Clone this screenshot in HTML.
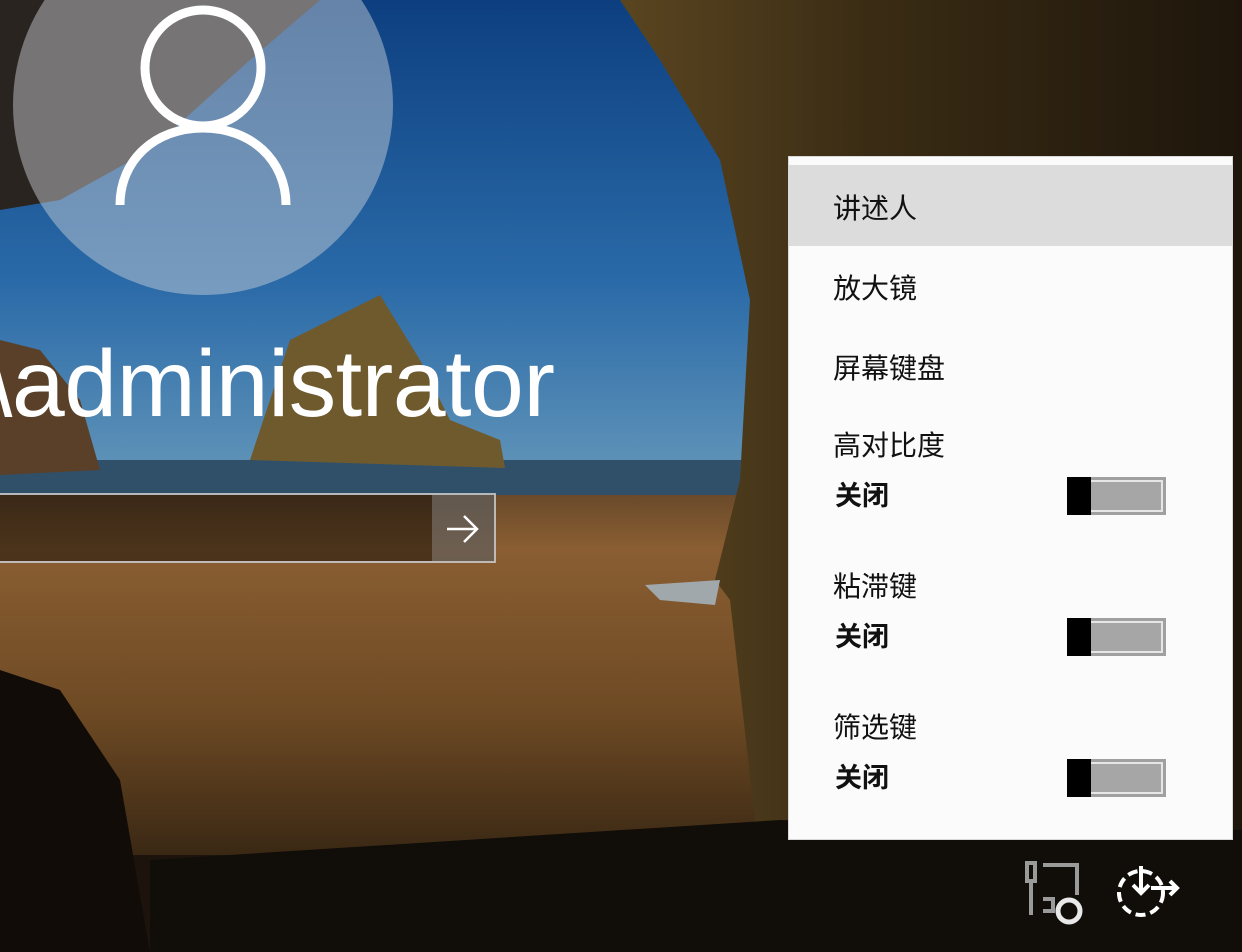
<!DOCTYPE html>
<html><head><meta charset="utf-8"><style>
*{margin:0;padding:0}
body{width:1242px;height:952px;overflow:hidden;position:relative;background:#1a120a;font-family:"Liberation Sans","Noto Sans CJK SC",sans-serif}
.abs{position:absolute}
.menu{left:788px;top:156px;width:445px;height:684px;background:#fbfbfc;border:1px solid #d8d8d8;box-sizing:border-box}
.item{position:absolute;left:44px;font-size:28px;color:#111;line-height:1}
.off{position:absolute;left:46px;font-size:27px;font-weight:bold;color:#111;line-height:1}
.tg{position:absolute;left:278px;width:99px;height:38px;box-sizing:border-box;background:#a6a6a6;border:3px solid #a0a0a0;box-shadow:inset 0 0 0 2px #e6e6e6}
.tg:before{content:"";position:absolute;left:-3px;top:-3px;width:24px;height:38px;background:#000}
</style></head><body>
<svg class="abs" style="left:0;top:0" width="1242" height="952">
<defs>
<linearGradient id="sky" x1="0" y1="0" x2="0" y2="1"><stop offset="0" stop-color="#0d3f80"/><stop offset=".6" stop-color="#2a6aa8"/><stop offset="1" stop-color="#5f93b8"/></linearGradient>
<linearGradient id="sand" x1="0" y1="0" x2="0" y2="1"><stop offset="0" stop-color="#6a4a2a"/><stop offset=".15" stop-color="#8a5e32"/><stop offset=".6" stop-color="#6e4a24"/><stop offset="1" stop-color="#3a2814"/></linearGradient>
<linearGradient id="cave" x1="0" y1="0" x2="1" y2="0"><stop offset="0" stop-color="#5a4520"/><stop offset=".4" stop-color="#3a2c14"/><stop offset="1" stop-color="#1e160c"/></linearGradient>
</defs>
<rect width="1242" height="952" fill="#1c140c"/>
<rect x="0" y="0" width="760" height="470" fill="url(#sky)"/>
<rect x="0" y="460" width="760" height="40" fill="#30506a"/>
<rect x="0" y="495" width="780" height="360" fill="url(#sand)"/>
<path d="M0 0H320L250 60L150 150L60 200L0 210Z" fill="#2a2420"/>
<path d="M0 340L40 350L80 400L100 470L0 475Z" fill="#5a4028"/>
<path d="M250 460L290 340L380 295L420 360L450 420L500 440L505 468Z" fill="#6f5a2e"/>
<path d="M620 0H1242V952H770L730 600L715 580L740 480L750 300L720 160L660 60Z" fill="url(#cave)"/>
<path d="M0 670L60 690L120 780L150 952H0Z" fill="#120c08"/>
<path d="M150 860L780 820L1242 830V952H150Z" fill="#110d09"/>
<path d="M645 585L720 580L715 605L660 600Z" fill="#a0a8ac"/>
</svg>
<div class="abs" style="left:13px;top:-85px;width:380px;height:380px;border-radius:50%;background:rgba(210,215,220,.45)"></div>
<svg class="abs" style="left:110px;top:0" width="190" height="210" fill="none" stroke="#fff" stroke-width="9">
<circle cx="93" cy="68" r="58"/>
<path d="M10 205C10 160 45 128 93 128C141 128 176 160 176 205"/>
</svg>
<div class="abs" style="left:-14px;top:330px;font-size:95px;color:#fff;letter-spacing:-.5px;white-space:nowrap">\administrator</div>
<div class="abs" style="left:-2px;top:493px;width:498px;height:70px;border:2px solid rgba(220,220,220,.8);box-sizing:border-box;background:rgba(0,0,0,.45)"></div>
<div class="abs" style="left:432px;top:495px;width:62px;height:66px;background:rgba(160,160,160,.4)"></div>
<svg class="abs" style="left:445px;top:512px" width="36" height="34" fill="none" stroke="#fff" stroke-width="2.5"><path d="M2 17H32M19 4L32 17L19 30"/></svg>
<div class="abs menu">
<div class="abs" style="left:0;top:8px;width:443px;height:81px;background:#dcdcdc"></div>
<div class="item" style="top:38px">讲述人</div>
<div class="item" style="top:118px">放大镜</div>
<div class="item" style="top:198px">屏幕键盘</div>
<div class="item" style="top:275px">高对比度</div>
<div class="off" style="top:326px">关闭</div>
<div class="tg" style="top:320px"></div>
<div class="item" style="top:416px">粘滞键</div>
<div class="off" style="top:467px">关闭</div>
<div class="tg" style="top:461px"></div>
<div class="item" style="top:557px">筛选键</div>
<div class="off" style="top:608px">关闭</div>
<div class="tg" style="top:602px"></div>
</div>
<svg class="abs" style="left:1015px;top:855px" width="75" height="70" fill="none" stroke="#9a9a9a" stroke-width="4">
<rect x="12" y="8" width="8" height="18"/><path d="M16 26V60M28 10H62V40M28 44H38V56H28"/>
<circle cx="54" cy="56" r="11" stroke="#e8e8e8" stroke-width="5"/>
</svg>
<svg class="abs" style="left:1115px;top:860px" width="70" height="65" fill="none" stroke="#fff" stroke-width="4">
<circle cx="26" cy="33" r="22" stroke-dasharray="10 5"/>
<path d="M26 6V33M18 25L26 33L34 25M36 28H62M55 21L62 28L55 35"/>
</svg>
</body></html>
